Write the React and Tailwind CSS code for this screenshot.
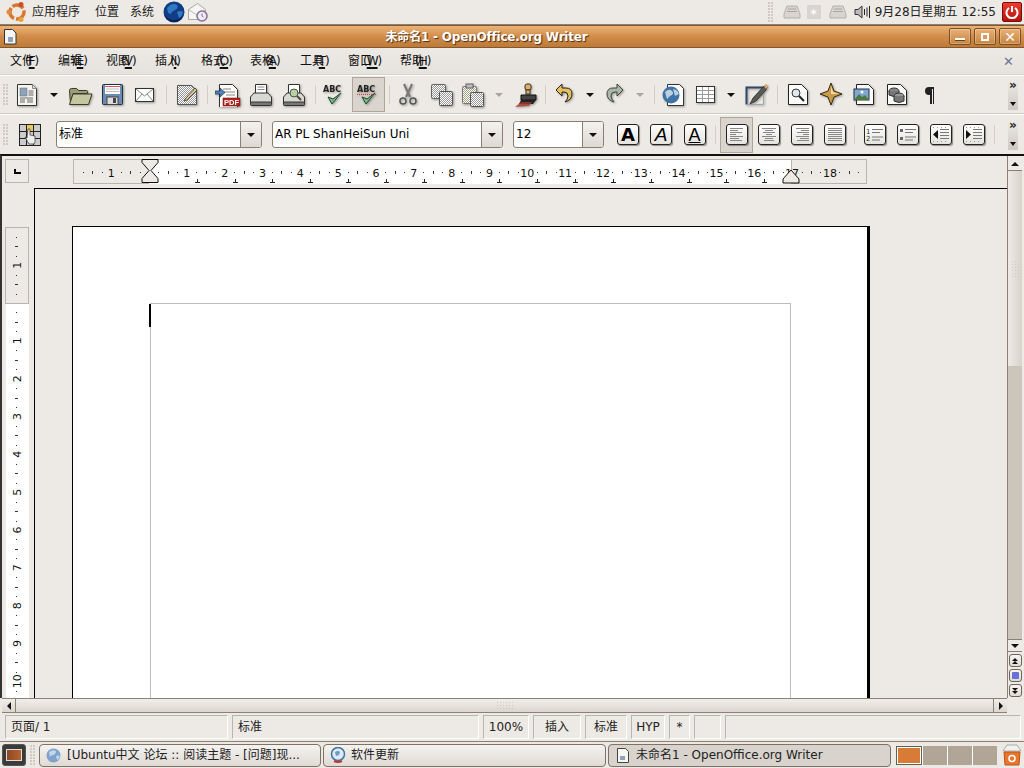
import { useState } from "react";

const Svg = ({ w = 24, h = 24, children, className = "" }) => (
    <svg width={w} height={h} viewBox={`0 0 ${w} ${h}`} className={className}>{children}</svg>
);

const shade = "drop-shadow-[1px_1px_1px_rgba(0,0,0,0.35)]";

const Dither = ({ id, c = "#777" }) => (
    <pattern id={id} width="2" height="2" patternUnits="userSpaceOnUse">
        <rect width="2" height="2" fill="#fff" />
        <rect width="1" height="1" fill={c} />
        <rect x="1" y="1" width="1" height="1" fill={c} />
    </pattern>
);

const icons = {
    newDoc: () => (
        <Svg w={22} className={shade}>
            <path d="M1.500 1.500h15l4 4v17h-19z" fill="#f4f4f0" stroke="#333" />
            <path d="M16.500 1.500v4h4" fill="#ddd" stroke="#888" />
            <rect x="4" y="5" width="7" height="8" fill="#8ca3bd" stroke="#666" strokeWidth=".5" />
            <path d="M12.500 8h5M12.500 10h5M12.500 12h5M4 15h13M4 17h5M11 17h6M4 19h5M11 19h6" stroke="#666" />
        </Svg>
    ),
    open: () => (
        <Svg w={26} className={shade}>
            <path d="M2.500 7.500q0-2 2-2h5l2 2h8q1 0 1 1v2H6l-2.500 10z" fill="#9a9c78" stroke="#3c3c2c" />
            <path d="M6 11h19l-3.500 10.500H2.500z" fill="#c4c6a0" stroke="#3c3c2c" />
        </Svg>
    ),
    save: () => (
        <Svg w={22} className={shade}>
            <rect x="1.500" y="1.500" width="20" height="20" rx="1" fill="#6a8bb4" stroke="#22303f" />
            <rect x="4" y="2" width="15" height="9" fill="#fff" />
            <path d="M4 3.500h15" stroke="#d55" />
            <path d="M5 6h13M5 8.500h13" stroke="#bbb" />
            <rect x="6" y="14" width="11" height="7.500" fill="#ddd" stroke="#444" />
            <rect x="12" y="15" width="3" height="5" fill="#444" />
        </Svg>
    ),
    mail: () => (
        <Svg w={20} className={shade}>
            <rect x=".5" y="5.500" width="18" height="13" fill="#fdfdfb" stroke="#333" />
            <path d="M1 6l8.500 7L18 6M1 18l6-7M18 18l-6-7" fill="none" stroke="#888" />
        </Svg>
    ),
    edit: () => (
        <Svg w={22} className={shade}>
            <defs><Dither id="ed" c="#999" /></defs>
            <path d="M1.500 2.500h14l5 5v14h-19z" fill="url(#ed)" stroke="#555" />
            <path d="M9 16l10-11 2 2-10 10-3 1z" fill="#d8c590" stroke="#333" strokeWidth=".8" />
        </Svg>
    ),
    pdf: () => (
        <Svg w={26} className={shade}>
            <path d="M4.500 1.500h13l5 5v18h-18z" fill="#fbfbf9" stroke="#333" />
            <path d="M8 6h8M8 9h12M11 12h9" stroke="#888" />
            <path d="M0 8h5V5l5 4.500L5 14v-3H0z" fill="#4f82bf" stroke="#234" strokeWidth=".7" />
            <rect x="8" y="15" width="17" height="8" fill="#b3211d" stroke="#611" strokeWidth=".5" />
            <text x="16.500" y="22" fontSize="7.500" fontWeight="700" fontFamily="Liberation Sans" fill="#fff" textAnchor="middle">PDF</text>
        </Svg>
    ),
    print: () => (
        <Svg w={24} className={shade}>
            <path d="M6.500 1.500h11v10h-11z" fill="#fff" stroke="#333" />
            <path d="M8.500 4h7M8.500 6.500h7" stroke="#888" />
            <path d="M5 10h14l3.500 4v6h-21v-6z" fill="#d9d9d3" stroke="#333" />
            <rect x="1.500" y="19" width="21" height="3.500" rx="1" fill="#777" stroke="#333" />
        </Svg>
    ),
    preview: () => (
        <Svg w={24} className={shade}>
            <path d="M6.500 1.500h11v10h-11z" fill="#fff" stroke="#333" />
            <path d="M5 10h14l3.500 4v6h-21v-6z" fill="#d9d9d3" stroke="#333" />
            <rect x="1.500" y="19" width="21" height="3.500" rx="1" fill="#777" stroke="#333" />
            <circle cx="12" cy="10" r="4" fill="#b9cfa8" stroke="#454" />
            <path d="M15 13l4 4" stroke="#543" strokeWidth="2" />
        </Svg>
    ),
    spell: ({ red }) => (
        <Svg w={24} className={shade}>
            <text x="1" y="9" fontSize="8" fontWeight="700" fontFamily="DejaVu Sans" fill="#222">ABC</text>
            {red && <path d="M1 11.500h19" stroke="#d33" strokeDasharray="1 1" />}
            <path d="M6 14l4 7 9-11-8 6z" fill="#7cb887" stroke="#1e4a2b" />
        </Svg>
    ),
    cut: () => (
        <Svg w={20} className={shade}>
            <path d="M6 1l6 13M14 1L8 14" stroke="#777" strokeWidth="2" fill="none" />
            <circle cx="5" cy="18" r="3" fill="none" stroke="#555" strokeWidth="1.500" />
            <circle cx="15" cy="18" r="3" fill="none" stroke="#555" strokeWidth="1.500" />
        </Svg>
    ),
    copy: () => (
        <Svg w={24} className={shade}>
            <defs><Dither id="cp" c="#999" /></defs>
            <rect x="1.500" y="1.500" width="14" height="14" rx="1" fill="url(#cp)" stroke="#666" />
            <rect x="9.500" y="8.500" width="13" height="14" rx="1" fill="url(#cp)" stroke="#555" />
        </Svg>
    ),
    paste: () => (
        <Svg w={24} className={shade}>
            <defs><Dither id="ps" c="#a3a386" /></defs>
            <rect x="1.500" y="3.500" width="14" height="17" rx="1" fill="url(#ps)" stroke="#777" />
            <rect x="5" y="1" width="7" height="4" fill="#bbb" stroke="#666" />
            <rect x="9.500" y="9.500" width="13" height="14" rx="1" fill="url(#cp)" stroke="#555" />
        </Svg>
    ),
    brush: () => (
        <Svg w={24} className={shade}>
            <rect x="10" y="1" width="6" height="6" rx="2" fill="#d9b36a" stroke="#432" />
            <rect x="11" y="7" width="4" height="4" fill="#d9b36a" stroke="#432" />
            <path d="M6 12h15v5H6z" fill="#444" stroke="#111" />
            <path d="M6 17h15l-3 4H4z" fill="#222" />
            <path d="M0 24l6-5h11l-3 4z" fill="#a33b2c" opacity=".8" />
        </Svg>
    ),
    undo: () => (
        <Svg w={18} className={shade}>
            <path d="M7 1L1 7l6 6V9h2q4 0 4 4 0 3-3 6 7-2 7-8 0-6-6-6H7z" fill="#e8c05c" stroke="#222" />
        </Svg>
    ),
    redo: () => (
        <Svg w={18} className={shade}>
            <path d="M11 1l6 6-6 6V9H9q-4 0-4 4 0 3 3 6-7-2-7-8 0-6 6-6h4z" fill="#a9b8a5" stroke="#444" />
        </Svg>
    ),
    web: () => (
        <Svg w={24} className={shade}>
            <path d="M6.500 1.500h12l4 4v17h-16z" fill="#fbfbf9" stroke="#333" />
            <circle cx="10" cy="12" r="8.500" fill="#3f73a8" />
            <path d="M4 9q4-4 7-1t-2 5l-3 3zM12 6q5 1 6 5l-4 2z" fill="#bdd0e0" />
        </Svg>
    ),
    table: () => (
        <Svg w={20} className={shade}>
            <rect x=".5" y="3.500" width="18" height="16" fill="#fff" stroke="#333" />
            <path d="M6.500 4v15M12.500 4v15M1 7.500h17M1 11.500h17M1 15.500h17" stroke="#999" />
        </Svg>
    ),
    draw: () => (
        <Svg w={24} className={shade}>
            <path d="M1.500 21.500v-17h17" fill="none" stroke="#2f4768" strokeWidth="2" />
            <path d="M1.500 21.500h17v-17" fill="none" stroke="#9aa5b5" />
            <path d="M5 21l3-6L19 3l3 1-1 3-10 11z" fill="#5a5a55" stroke="#222" strokeWidth=".7" />
            <path d="M19 3l2-2 2 2-2 3z" fill="#d9a56a" />
        </Svg>
    ),
    find: () => (
        <Svg w={22} className={shade}>
            <path d="M1.500 1.500h13l6 6v14h-19z" fill="#fbfbf9" stroke="#222" />
            <circle cx="9" cy="10" r="4" fill="#dfe8ef" stroke="#333" />
            <path d="M12 13l5 5" stroke="#222" strokeWidth="2" />
        </Svg>
    ),
    star: () => (
        <Svg w={22} className={shade}>
            <path d="M11 0l3 8 8 3-8 3-3 8-3-8-8-3 8-3z" fill="#c99a4c" stroke="#3a2a10" />
            <path d="M11 3l2 6 6 2-8 0z" fill="#efd9a8" />
        </Svg>
    ),
    image: () => (
        <Svg w={22} className={shade}>
            <path d="M3.500 1.500h12l5 5v15h-17z" fill="#fbfbf9" stroke="#222" />
            <rect x="1" y="6" width="15" height="11" fill="#7fa6d0" stroke="#234" />
            <path d="M1 17l5-6 3 3 3-2 4 5z" fill="#4d7a3c" />
            <circle cx="9" cy="9" r="1.500" fill="#fff" />
        </Svg>
    ),
    db: () => (
        <Svg w={22} className={shade}>
            <path d="M1.500 1.500h13l6 6v14h-19z" fill="#fbfbf9" stroke="#222" />
            <ellipse cx="8" cy="8" rx="5" ry="3" fill="#888" stroke="#333" />
            <path d="M3 8v4q5 3 10 0V8" fill="#777" stroke="#333" />
            <ellipse cx="13" cy="13" rx="5" ry="3" fill="#999" stroke="#333" />
            <path d="M8 13v5q5 3 10 0v-5" fill="#777" stroke="#333" />
        </Svg>
    ),
    pilcrow: () => (
        <Svg w={12} h={20}>
            <path d="M10 2H5a3.500 3.500 0 0 0 0 8h1v9h2V4h1v15h1z" fill="#222" />
        </Svg>
    ),
    styles: () => (
        <Svg w={22} h={22}>
            <rect x=".5" y=".5" width="21" height="21" fill="#ccc" stroke="#222" />
            <path d="M7.500 1v20M14.500 1v20M1 7.500h20M1 14.500h20" stroke="#222" />
            <rect x="8" y="1" width="6" height="6" fill="#e8c95c" />
            <path d="M9 5h2v6l5 1v6q0 2-2 2h-4l-4-7 2 1z" fill="#eee" stroke="#333" strokeWidth=".7" />
        </Svg>
    ),
};

const Grip = () => (
    <div className="w-[5px] h-[21px] grid grid-cols-2 gap-[1px] opacity-60 overflow-hidden">
        {Array.from({ length: 14 }).map((_, i) => (
            <span key={i} className="w-[2px] h-[2px] bg-[#bdb6ae]" />
        ))}
    </div>
);

const Tool = ({ icon, w, active, red }) => {
    const Ic = icons[icon];
    return (
        <div className={`${w} h-full flex items-center justify-center shrink-0`}>
            {active ? (
                <div className="w-[33px] h-[35px] flex items-center justify-center bg-[#d9d4ce] border border-[#b0a596]">
                    <Ic red={red} />
                </div>
            ) : (
                <Ic red={red} />
            )}
        </div>
    );
};

const Sep = ({ w }) => (
    <div className={`${w} h-full flex items-center justify-center shrink-0`}>
        <div className="w-px h-[19px] bg-[#d4cec7]" />
    </div>
);

const Arrow = ({ w, dim }) => (
    <div className={`${w} h-full flex items-center justify-center shrink-0`}>
        <span className={`w-0 h-0 border-x-[4px] border-x-transparent border-t-[4px] ${dim ? "border-t-[#aaa69f]" : "border-t-[#111]"}`} />
    </div>
);

const Overflow = () => (
    <div className="w-[10px] h-[30px] flex flex-col items-center justify-between bg-gradient-to-b from-[#edeae6] to-[#cfc9c2] shrink-0 pb-[4px]">
        <span className="text-[12px] leading-[10px] font-bold text-[#222]">»</span>
        <span className="w-0 h-0 border-x-[3px] border-x-transparent border-t-[4px] border-t-[#111]" />
    </div>
);

const Combo = ({ label, w }) => (
    <div className={`${w} h-[27px] flex rounded-[3px] border border-[#8b7f72] bg-white overflow-hidden shrink-0`}>
        <div className="flex-1 px-[1px] pl-[2px] text-[12px] leading-[25px] text-black whitespace-nowrap">{label}</div>
        <div className="w-[21px] flex items-center justify-center border-l border-[#8b7f72] bg-gradient-to-b from-[#f4f2ef] to-[#ddd8d2]">
            <span className="w-0 h-0 border-x-[4px] border-x-transparent border-t-[4px] border-t-[#111]" />
        </div>
    </div>
);

const Square = ({ children, w }) => (
    <div className={`${w} h-full flex items-center justify-center shrink-0`}>
        <div className="w-[22px] h-[21px] rounded-[3px] border border-[#222] bg-gradient-to-b from-white to-[#e6e3de] flex items-center justify-center shadow-[1px_1px_1px_rgba(0,0,0,0.4)]">
            {children}
        </div>
    </div>
);

const Lines = ({ rows }) => (
    <svg width="16" height="13" viewBox="0 0 16 13">
        {rows.map((r, i) => (
            <path key={i} d={`M${r[0]} ${i * 2 + 0.5}H${r[1]}`} stroke="#888" />
        ))}
    </svg>
);

const alignRows = {
    left: [[1, 14], [1, 9], [1, 13], [1, 7], [1, 14], [1, 10], [1, 13]],
    center: [[1, 15], [4, 12], [2, 14], [5, 11], [1, 15], [4, 12], [3, 13]],
    right: [[2, 15], [7, 15], [3, 15], [9, 15], [2, 15], [6, 15], [3, 15]],
    just: [[1, 15], [1, 15], [1, 15], [1, 15], [1, 15], [1, 15], [1, 15]],
};

// the mnemonic is squeezed over the last glyph, the same way the old GTK menu drew it
const MenuItem = ({ w, name, key_ }) => (
    <div className={`${w} shrink-0 text-[12px] leading-[16px] text-[#111] whitespace-nowrap`}>
        {name}
        <span className="-ml-[9px] tracking-[-1px]">(<span className="underline underline-offset-2 decoration-2">{key_}</span>)</span>
    </div>
);

// horizontal ruler, 794px wide, page margin sits at x=76
const HRuler = () => {
    const cm = 37.83;
    const ticks = [];
    for (let i = -2; i <= 19.5; i += 0.25) {
        const x = 76 + i * cm;
        if (x < 4 || x > 790) continue;
        if (Number.isInteger(i)) continue;
        const half = Number.isInteger(i * 2);
        ticks.push(<rect key={i} x={Math.round(x)} y={half ? 12 : 13} width="1" height={half ? 3 : 1} fill="#333" />);
    }
    const nums = [];
    for (let n = -1; n <= 18; n++) {
        if (n === 0) continue;
        nums.push(
            <text key={n} x={76 + n * cm} y="18" fontSize="11" fill="#111" textAnchor="middle" fontFamily="DejaVu Sans">
                {Math.abs(n)}
            </text>
        );
    }
    const stops = [];
    for (let s = 1; s <= 16; s++) {
        const sx = Math.round(76 + s * cm + 10);
        stops.push(<path key={s} d={`M${sx - 2} 23.500h5M${sx}.500 20v3`} stroke="#222" />);
    }
    return (
        <svg width="796" height="26" viewBox="0 0 796 26" className="block">
            <rect x="0.500" y="0.500" width="793" height="24" fill="#edeae5" stroke="#b9b4ac" />
            <rect x="76" y="1" width="642" height="24" fill="#fff" />
            <path d="M718.500 0.500V25" stroke="#b9b4ac" />
            {ticks}
            {nums}
            {stops}
            <path d="M69 .500h16v3l-7 8 7 8v4H69v-4l7-8-7-8z" fill="#edeae5" stroke="#111" />
            <path d="M718 11l8 9v4h-16v-4z" fill="#edeae5" stroke="#111" />
        </svg>
    );
};

const VRuler = () => {
    const cm = 37.83;
    const ticks = [];
    for (let i = -2; i <= 11; i += 0.25) {
        const y = 76 + i * cm;
        if (y < 4 || y > 471) continue;
        if (Number.isInteger(i)) continue;
        const half = Number.isInteger(i * 2);
        ticks.push(<rect key={i} x={half ? 10 : 11} y={Math.round(y)} width={half ? 3 : 1} height="1" fill="#333" />);
    }
    const nums = [];
    for (let n = -1; n <= 10; n++) {
        if (n === 0) continue;
        const y = 76 + n * cm;
        nums.push(
            <text key={n} x="12" y={y} fontSize="11" fill="#111" textAnchor="middle" fontFamily="DejaVu Sans" transform={`rotate(-90 12 ${y}) translate(0 4)`}>
                {Math.abs(n)}
            </text>
        );
    }
    return (
        <svg width="24" height="471" viewBox="0 0 24 471" className="block">
            <rect x="0.500" y="0.500" width="23" height="76" fill="#edeae5" stroke="#b9b4ac" />
            <rect x="1" y="77" width="23" height="394" fill="#fff" />
            {ticks}
            {nums}
        </svg>
    );
};

const ScrollBtn = ({ children, className = "" }) => (
    <div className={`flex items-center justify-center ${className}`}>{children}</div>
);

const NavBtn = ({ children }) => (
    <div className="w-[13px] h-[13px] rounded-[3px] border border-[#6f6558] bg-gradient-to-b from-[#f7f5f2] to-[#e0dbd5] flex flex-col items-center justify-center">
        {children}
    </div>
);

const StatusBox = ({ w, children, center }) => (
    <div className={`${w} h-[24px] shrink-0 border-t border-l border-[#b9b4ac] border-r border-b border-r-white border-b-white text-[12px] leading-[22px] text-[#222] whitespace-nowrap overflow-hidden ${center ? "text-center" : "pl-[5px]"}`}>
        {children}
    </div>
);

const TaskBtn = ({ icon, label, w, active }) => (
    <div className={`${w} h-[23px] shrink-0 rounded-[4px] border border-[#7d7265] flex items-center text-[12px] text-[#222] whitespace-nowrap overflow-hidden ${active ? "bg-[#d8d3cc]" : "bg-gradient-to-b from-[#f5f3f0] to-[#dfdad4]"}`}>
        <div className="w-[27px] flex justify-center shrink-0">{icon}</div>
        <span>{label}</span>
    </div>
);

const Globe = ({ size = 22 }) => (
    <svg width={size} height={size} viewBox="0 0 22 22">
        <circle cx="11" cy="11" r="10.500" fill="#123c85" />
        <path d="M4 7q5-6 10-3 2 3-2 5t-4 4l-3-1zM14 11q4-2 6 0-1 5-4 6z" fill="#2f7ac0" />
        <path d="M1 13q2 7 10 8 6 0 9-6-5 5-11 4-5-1-8-6z" fill="#071f4f" />
    </svg>
);

const PrinterTray = () => (
    <svg width="18" height="14" viewBox="0 0 18 14" className="opacity-70">
        <path d="M4 1h10l3 8v4H1V9z" fill="#d0ccc6" stroke="#9d978f" />
        <path d="M5 4h8M4 6.500h10" stroke="#8f8a83" />
    </svg>
);

export default function App() {
    const [menu] = useState([
        ["w-[48px]", "文件", "F"], ["w-[48px]", "编辑", "E"], ["w-[49px]", "视图", "V"],
        ["w-[46px]", "插入", "I"], ["w-[49px]", "格式", "O"], ["w-[50px]", "表格", "A"],
        ["w-[48px]", "工具", "T"], ["w-[52px]", "窗口", "W"], ["w-[48px]", "帮助", "H"],
    ]);

    return (
        <div className="w-[1024px] h-[768px] flex flex-col overflow-hidden bg-[#edeae5] font-['DejaVu_Sans','Noto_Sans_CJK_SC',sans-serif]">
            {/* top gnome panel */}
            <div className="h-[25px] shrink-0 flex items-center border-b border-[#8a8074] bg-[#edeae5] text-[12px] text-[#222]">
                <div className="w-[32px] flex justify-center pl-[1px] shrink-0">
                    <svg width="22" height="22" viewBox="0 0 22 22">
                        <circle cx="11" cy="11" r="7" fill="none" stroke="#d8772e" strokeWidth="3.500" strokeDasharray="12 2" />
                        <circle cx="3" cy="11" r="2.500" fill="#df8b3f" />
                        <circle cx="15" cy="3.500" r="2.500" fill="#c94f2d" />
                        <circle cx="15" cy="18.500" r="2.500" fill="#e9a23b" />
                    </svg>
                </div>
                <span className="w-[63px] shrink-0">应用程序</span>
                <span className="w-[35px] shrink-0">位置</span>
                <span className="w-[33px] shrink-0">系统</span>
                <Globe />
                <svg width="22" height="22" viewBox="0 0 22 22" className="ml-[2px]">
                    <path d="M1.500 8.500l9-6 8 6v10h-17z" fill="#f5f5f2" stroke="#aaa" />
                    <path d="M2 9l8 5 8-5" fill="none" stroke="#bbb" />
                    <circle cx="15" cy="15" r="5" fill="#eee" stroke="#8a6aa0" strokeWidth="1.500" />
                    <path d="M15 12.500V15l1.500 1" fill="none" stroke="#8a6aa0" />
                </svg>
                <div className="ml-auto flex items-center">
                    <div className="mr-[10px]"><Grip /></div>
                    <div className="mr-[6px]"><PrinterTray /></div>
                    <div className="w-[14px] h-[14px] bg-[#d8d4cf] mr-[8px] flex items-center justify-center text-white text-[11px] leading-none">✶</div>
                    <div className="mr-[7px]"><PrinterTray /></div>
                    <svg width="17" height="14" viewBox="0 0 17 14" className="mr-[4px]">
                        <path d="M1 4.500h3l4-3.500v12l-4-3.500H1z" fill="#bbb" stroke="#333" />
                        <path d="M10.500 4v6M13 2.500v9M15.500 1v12" stroke="#222" />
                    </svg>
                    <span className="whitespace-nowrap">9月28日星期五 12:55</span>
                    <div className="w-[20px] h-[20px] ml-[6px] mr-[2px] rounded-[2px] bg-gradient-to-b from-[#ee3b30] to-[#b3110c] border border-[#7d0c08] flex items-center justify-center">
                        <svg width="14" height="14" viewBox="0 0 14 14">
                            <path d="M4 3a5.500 5.500 0 1 0 6 0" fill="none" stroke="#fff" strokeWidth="2" />
                            <path d="M7 1v6" stroke="#fff" strokeWidth="2" />
                        </svg>
                    </div>
                </div>
            </div>

            {/* title bar */}
            <div className="h-[23px] shrink-0 flex items-center bg-gradient-to-b from-[#ebb476] via-[#d18c48] to-[#bd7a38] border-y border-y-[#85572a]">
                <svg width="14" height="16" viewBox="0 0 14 16" className="ml-[3px]">
                    <path d="M1.500 .500h8l3.500 3.500v11h-11.500z" fill="#f5f5f2" stroke="#333" />
                    <rect x="5" y="8" width="5" height="5" fill="#8fa3b8" />
                </svg>
                <div className="flex-1 text-center text-[12px] font-bold text-white pl-[7px] [text-shadow:1px_1px_1px_#4a2c10] whitespace-nowrap tracking-[-0.2px]">
                    未命名1 - OpenOffice.org Writer
                </div>
                <div className="flex gap-[3px] pr-[3px]">
                    {["min", "max", "close"].map((b) => (
                        <div key={b} className="w-[22px] h-[17px] rounded-[2px] border border-[#7a4f25] bg-gradient-to-b from-[#e8b078] to-[#c9853f] flex items-center justify-center shadow-[inset_0_0_0_1px_rgba(255,255,255,0.25)]">
                            {b === "min" && <span className="w-[10px] h-[3px] bg-white mt-[6px] border-b border-[#6a4520]" />}
                            {b === "max" && <span className="w-[8px] h-[8px] border-2 border-white" />}
                            {b === "close" && <span className="text-white text-[14px] font-bold leading-none">✕</span>}
                        </div>
                    ))}
                </div>
            </div>

            {/* menu bar */}
            <div className="h-[27px] shrink-0 flex items-center pl-[10px] bg-gradient-to-b from-[#edeae5] to-[#e6e2dd] border-b border-[#d8d3cc]">
                {menu.map(([w, n, k]) => (
                    <MenuItem key={n} w={w} name={n} key_={k} />
                ))}
                <span className="ml-auto mr-[10px] text-[#6b7890] text-[13px] font-bold leading-none">✕</span>
            </div>

            {/* standard toolbar */}
            <div className="h-[39px] shrink-0 flex items-center pl-[3px] border-t border-white border-b border-b-[#cfc9c1]">
                <div className="w-[7px] shrink-0"><Grip /></div>
                <Tool icon="newDoc" w="w-[34px]" />
                <Arrow w="w-[20px]" />
                <Tool icon="open" w="w-[32px]" />
                <Tool icon="save" w="w-[32px]" />
                <Tool icon="mail" w="w-[34px]" />
                <Sep w="w-[8px]" />
                <Tool icon="edit" w="w-[34px]" />
                <Sep w="w-[6px]" />
                <Tool icon="pdf" w="w-[36px]" />
                <Tool icon="print" w="w-[30px]" />
                <Tool icon="preview" w="w-[36px]" />
                <Sep w="w-[6px]" />
                <Tool icon="spell" w="w-[32px]" />
                <Tool icon="spell" w="w-[36px]" active red />
                <Sep w="w-[6px]" />
                <Tool icon="cut" w="w-[32px]" />
                <Tool icon="copy" w="w-[36px]" />
                <Tool icon="paste" w="w-[26px]" />
                <Arrow w="w-[26px]" dim />
                <Tool icon="brush" w="w-[30px]" />
                <Sep w="w-[6px]" />
                <Tool icon="undo" w="w-[32px]" />
                <Arrow w="w-[20px]" />
                <Tool icon="redo" w="w-[30px]" />
                <Arrow w="w-[20px]" dim />
                <Sep w="w-[8px]" />
                <Tool icon="web" w="w-[30px]" />
                <Tool icon="table" w="w-[36px]" />
                <Arrow w="w-[14px]" />
                <Tool icon="draw" w="w-[38px]" />
                <Sep w="w-[2px]" />
                <Tool icon="find" w="w-[40px]" />
                <Tool icon="star" w="w-[26px]" />
                <Tool icon="image" w="w-[40px]" />
                <Tool icon="db" w="w-[26px]" />
                <Tool icon="pilcrow" w="w-[40px]" />
                <div className="ml-auto mr-[6px]"><Overflow /></div>
            </div>

            {/* formatting toolbar */}
            <div className="h-[40px] shrink-0 flex items-center pl-[3px] border-t border-white">
                <div className="w-[16px] shrink-0"><Grip /></div>
                <Tool icon="styles" w="w-[22px]" />
                <div className="w-[15px] shrink-0" />
                <Combo label="标准" w="w-[206px]" />
                <div className="w-[10px] shrink-0" />
                <Combo label="AR PL ShanHeiSun Uni" w="w-[231px]" />
                <div className="w-[10px] shrink-0" />
                <Combo label="12" w="w-[91px]" />
                <div className="w-[8px] shrink-0" />
                <Square w="w-[32px]"><span className="font-bold text-[18px] leading-none text-black">A</span></Square>
                <Square w="w-[34px]"><span className="font-['Liberation_Sans'] italic text-[19px] leading-none text-black">A</span></Square>
                <Square w="w-[33px]"><span className="font-['Liberation_Sans'] underline text-[18px] leading-none text-black">A</span></Square>
                <Sep w="w-[9px]" />
                <div className="w-[33px] h-[36px] shrink-0 flex items-center justify-center bg-[#d9d4ce] border border-[#b0a596]">
                    <div className="w-[22px] h-[21px] rounded-[3px] border border-[#222] bg-gradient-to-b from-white to-[#e6e3de] flex items-center justify-center shadow-[1px_1px_1px_rgba(0,0,0,0.4)]"><Lines rows={alignRows.left} /></div>
                </div>
                <Square w="w-[32px]"><Lines rows={alignRows.center} /></Square>
                <Square w="w-[33px]"><Lines rows={alignRows.right} /></Square>
                <Square w="w-[33px]"><Lines rows={alignRows.just} /></Square>
                <Sep w="w-[7px]" />
                <Square w="w-[33px]">
                    <svg width="18" height="15" viewBox="0 0 18 15">
                        <text x="0" y="6.500" fontSize="7" fontFamily="DejaVu Sans" fill="#333">1</text>
                        <text x="0" y="14" fontSize="7" fontFamily="DejaVu Sans" fill="#333">2</text>
                        <path d="M6 2.500h11M6 5.500h8M6 10h11M6 13h8" stroke="#777" />
                    </svg>
                </Square>
                <Square w="w-[33px]">
                    <svg width="18" height="15" viewBox="0 0 18 15">
                        <rect x="1" y="2" width="3" height="3" fill="#666" />
                        <rect x="1" y="10" width="3" height="3" fill="#666" />
                        <path d="M6 2.500h11M6 5.500h8M6 10h11M6 13h8" stroke="#777" />
                    </svg>
                </Square>
                <Square w="w-[33px]">
                    <svg width="18" height="15" viewBox="0 0 18 15">
                        <path d="M6 3L1 7.500 6 12z" fill="#111" />
                        <path d="M8 2.500h9M8 5.500h9M8 8.500h9M8 11.500h9" stroke="#777" />
                        <path d="M1 .500h16M1 14.500h16" stroke="#999" strokeDasharray="1 3" />
                    </svg>
                </Square>
                <Square w="w-[33px]">
                    <svg width="18" height="15" viewBox="0 0 18 15">
                        <path d="M1 3l5 4.500L1 12z" fill="#111" />
                        <path d="M8 2.500h9M8 5.500h9M8 8.500h9M8 11.500h9" stroke="#777" />
                        <path d="M1 .500h16M1 14.500h16" stroke="#999" strokeDasharray="1 3" />
                    </svg>
                </Square>
                <Sep w="w-[8px]" />
                <div className="ml-auto mr-[6px]"><Overflow /></div>
            </div>

            {/* work area */}
            <div className="h-[544px] shrink-0 flex border-t-2 border-t-[#111] border-l-2 border-l-[#333]">
                <div className="flex-1 flex flex-col min-w-0">
                    <div className="h-[32px] shrink-0 flex pt-[3px] pl-[3px]">
                        <div className="w-[24px] h-[24px] border border-[#b9b4ac] flex items-center justify-center shrink-0">
                            <span className="w-[7px] h-[5px] border-l-2 border-b-2 border-black" />
                        </div>
                        <div className="w-[44px] shrink-0" />
                        <HRuler />
                    </div>
                    <div className="flex-1 flex min-h-0">
                        <div className="w-[32px] shrink-0 pl-[3px] pt-[39px] overflow-hidden"><VRuler /></div>
                        <div className="flex-1 border-t border-t-black border-l border-l-black pl-[37px] pt-[37px] overflow-hidden">
                            <div className="w-[798px] h-[600px] bg-white border-t border-l border-black border-r-[3px]">
                                <div className="ml-[77px] mt-[76px] w-[641px] h-[500px] border border-[#bdbdbd] border-b-0">
                                    <div className="w-[2px] h-[23px] bg-black -ml-[2px]" />
                                </div>
                            </div>
                        </div>
                    </div>
                </div>

                {/* vertical scrollbar */}
                <div className="w-[15px] shrink-0 flex flex-col items-center border-l border-[#8a8074] mr-[2px] pt-[2px]">
                    <ScrollBtn className="w-full h-[13px] border-b border-[#8a8074]">
                        <span className="w-0 h-0 border-x-[4px] border-x-transparent border-b-[4px] border-b-[#111]" />
                    </ScrollBtn>
                    <div className="w-full h-[468px] flex flex-col bg-[#cbc5bc]">
                        <div className="h-[196px] bg-gradient-to-r from-[#eeeae5] to-[#d8d2cb] border-b border-[#c9c3bb] flex items-center justify-center">
                            <div className="w-[9px] h-[17px] opacity-60 bg-[radial-gradient(#c4beb5_1px,transparent_1px)] bg-[length:3px_3px]" />
                        </div>
                    </div>
                    <ScrollBtn className="w-full h-[13px] border-y border-[#8a8074]">
                        <span className="w-0 h-0 border-x-[4px] border-x-transparent border-t-[4px] border-t-[#111]" />
                    </ScrollBtn>
                    <div className="flex flex-col gap-[2px] mt-[2px]">
                        <NavBtn>
                            <span className="w-0 h-0 border-x-[3px] border-x-transparent border-b-[3px] border-b-[#111]" />
                            <span className="w-0 h-0 border-x-[3px] border-x-transparent border-b-[3px] border-b-[#111]" />
                        </NavBtn>
                        <NavBtn><span className="w-[7px] h-[7px] bg-[#6a72d8] rounded-[1px]" /></NavBtn>
                        <NavBtn>
                            <span className="w-0 h-0 border-x-[3px] border-x-transparent border-t-[3px] border-t-[#111]" />
                            <span className="w-0 h-0 border-x-[3px] border-x-transparent border-t-[3px] border-t-[#111]" />
                        </NavBtn>
                    </div>
                </div>
            </div>

            {/* horizontal scrollbar */}
            <div className="h-[15px] shrink-0 flex border-y border-[#8a8074] ml-[2px] mr-[17px] bg-gradient-to-b from-[#f1eeea] to-[#dbd6cf]">
                <ScrollBtn className="w-[14px] border-r border-[#8a8074] shrink-0">
                    <span className="w-0 h-0 border-y-[4px] border-y-transparent border-r-[4px] border-r-[#111]" />
                </ScrollBtn>
                <div className="flex-1 flex items-center justify-center">
                    <div className="w-[17px] h-[9px] opacity-50 bg-[radial-gradient(#b5aea5_1px,transparent_1px)] bg-[length:3px_3px]" />
                </div>
                <ScrollBtn className="w-[14px] border-l border-[#8a8074] shrink-0">
                    <span className="w-0 h-0 border-y-[4px] border-y-transparent border-l-[4px] border-l-[#111]" />
                </ScrollBtn>
            </div>

            {/* status bar */}
            <div className="h-[29px] shrink-0 flex items-center gap-[4px] pl-[5px] pr-[5px] border-b border-[#8a8074]">
                <StatusBox w="w-[223px]">页面/ 1</StatusBox>
                <StatusBox w="w-[247px]">标准</StatusBox>
                <StatusBox w="w-[46px]" center>100%</StatusBox>
                <StatusBox w="w-[48px]" center>插入</StatusBox>
                <StatusBox w="w-[42px]" center>标准</StatusBox>
                <StatusBox w="w-[34px]" center>HYP</StatusBox>
                <StatusBox w="w-[21px]" center>*</StatusBox>
                <StatusBox w="w-[27px]" />
                <StatusBox w="w-[296px]" />
            </div>

            {/* bottom gnome panel */}
            <div className="flex-1 flex items-center pl-[2px]">
                <div className="w-[24px] h-[22px] rounded-[3px] border border-[#555] bg-[#3a3a38] flex items-center justify-center shrink-0">
                    <span className="w-[16px] h-[12px] bg-gradient-to-r from-[#8a4a25] to-[#b8622e] border border-[#ddd]" />
                </div>
                <div className="w-[13px] flex justify-center shrink-0"><Grip /></div>
                <TaskBtn w="w-[282px]" icon={
                    <svg width="15" height="15" viewBox="0 0 15 15">
                        <circle cx="7.500" cy="7.500" r="7" fill="#7fa3cc" />
                        <path d="M3 4q4-3 7-1 0 3-3 4t-3 2zM10 8q3-1 4 0-1 3-3 4z" fill="#c3d5e8" />
                    </svg>
                } label="[Ubuntu中文 论坛 :: 阅读主题 - [问题]现..." />
                <div className="w-[2px] shrink-0" />
                <TaskBtn w="w-[283px]" icon={
                    <svg width="16" height="16" viewBox="0 0 16 16">
                        <circle cx="8" cy="7" r="6.500" fill="#dfe9f3" stroke="#3f73a8" strokeWidth="1.500" />
                        <path d="M5 5q3-2 5 0l-1 3-3 1z" fill="#6b9ac7" />
                        <path d="M4 14q4 2 8 0" fill="none" stroke="#c0392b" strokeWidth="2" />
                    </svg>
                } label="软件更新" />
                <div className="w-[2px] shrink-0" />
                <TaskBtn w="w-[283px]" active icon={
                    <svg width="12" height="15" viewBox="0 0 12 15"><path d="M.500 .500h8l3 3v11H.500z" fill="#f5f5f2" stroke="#444" /><rect x="3" y="8" width="5" height="4" fill="#8fa3b8" /></svg>
                } label="未命名1 - OpenOffice.org Writer" />
                <div className="w-[5px] shrink-0" />
                <div className="w-[101px] h-[19px] flex gap-px bg-white shrink-0">
                    <div className="flex-1 bg-[#d87b37] border border-[#6b5d4c] outline outline-1 outline-white -outline-offset-2" />
                    <div className="flex-1 bg-[#b1a597]" />
                    <div className="flex-1 bg-[#b1a597]" />
                    <div className="flex-1 bg-[#b1a597]" />
                </div>
                <svg width="22" height="22" viewBox="0 0 22 22" className="ml-[4px]">
                    <path d="M2 7l4-6h10l4 6z" fill="#f1f1ee" stroke="#aaa" />
                    <path d="M3 8h16l-1 13H4z" fill="#e9762b" stroke="#b9561a" />
                    <circle cx="11" cy="14.500" r="3" fill="none" stroke="#fff" strokeWidth="1.500" />
                </svg>
            </div>
        </div>
    );
}
